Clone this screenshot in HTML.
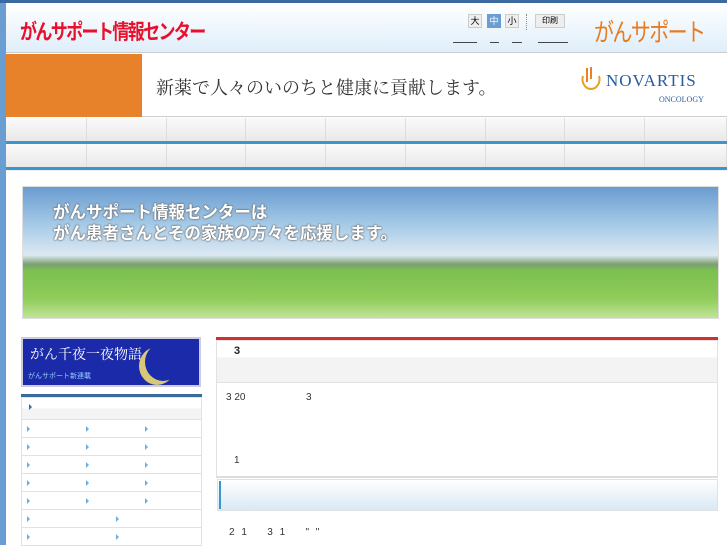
<!DOCTYPE html>
<html><head><meta charset="utf-8"><style>
*{margin:0;padding:0;box-sizing:border-box}
body{width:727px;height:545px;overflow:hidden;background:#fff;font-family:"Liberation Sans","Noto Sans CJK JP",sans-serif;position:relative}
.a{position:absolute}
.navc{position:absolute;height:24px;border-right:1px solid #ddd;background:linear-gradient(#fafafa,#e8e8e8)}
.row{position:absolute;left:21px;width:181px;height:18px;border-bottom:1px solid #e2e2e2;border-left:1px solid #e2e2e2;border-right:1px solid #e2e2e2}
.tri{position:absolute;width:0;height:0;border-left:3px solid #6ab0e0;border-top:3px solid transparent;border-bottom:3px solid transparent;top:6px}
</style></head><body>
<div class="a" style="left:0;top:0;width:6px;height:545px;background:#6a9ed2"></div>
<div class="a" style="left:0;top:0;width:727px;height:3px;background:#3a6aa0"></div>
<div class="a" style="left:6px;top:3px;width:721px;height:50px;background:linear-gradient(#fff,#dfeefa);border-bottom:1px solid #ccc"></div>
<div class="a" style="left:20px;top:16px;font-size:21px;font-weight:bold;color:#e8102a;letter-spacing:-2px;transform:scaleX(0.81);transform-origin:left;white-space:nowrap">がんサポート情報センター</div>
<div class="a" style="left:468px;top:14px;width:14px;height:14px;background:#eee;border:1px solid #ccc;font-size:9px;text-align:center;line-height:12px">大</div>
<div class="a" style="left:487px;top:14px;width:14px;height:14px;background:#6a9ed2;color:#fff;font-size:9px;text-align:center;line-height:14px">中</div>
<div class="a" style="left:505px;top:14px;width:14px;height:14px;background:#eee;border:1px solid #ccc;font-size:9px;text-align:center;line-height:12px">小</div>
<div class="a" style="left:526px;top:14px;height:16px;border-left:1px dotted #888"></div>
<div class="a" style="left:535px;top:14px;width:30px;height:14px;background:#eee;border:1px solid #ccc;font-size:8px;text-align:center;line-height:12px">印刷</div>
<div class="a" style="left:453px;top:42px;width:24px;border-top:1px solid #444"></div>
<div class="a" style="left:490px;top:42px;width:9px;border-top:1px solid #444"></div>
<div class="a" style="left:512px;top:42px;width:10px;border-top:1px solid #444"></div>
<div class="a" style="left:538px;top:42px;width:30px;border-top:1px solid #444"></div>
<div class="a" style="left:594px;top:13px;font-size:25px;color:#e87a20;letter-spacing:-2px;transform:scaleX(0.8);transform-origin:left;white-space:nowrap">がんサポート</div>
<div class="a" style="left:6px;top:54px;width:721px;height:63px;background:#fff;border-bottom:1px solid #ccc"></div>
<div class="a" style="left:6px;top:54px;width:136px;height:63px;background:#e8822a"></div>
<div class="a" style="left:156px;top:74px;font-size:18px;color:#333;font-family:'Liberation Serif','Noto Serif CJK SC',serif">新薬で人々のいのちと健康に貢献します。</div>
<svg class="a" style="left:580px;top:66px" width="22" height="26" viewBox="0 0 22 26"><path d="M7 2v14M11 1v12" stroke="#e8822a" stroke-width="2" fill="none"/><path d="M3 10c-2 6 2 13 8 13s10-7 8-13" stroke="#e8a020" stroke-width="2" fill="none"/></svg>
<div class="a" style="left:606px;top:71px;font-size:17px;color:#2a5aa0;font-family:'Liberation Serif',serif;letter-spacing:1px">NOVARTIS</div>
<div class="a" style="left:659px;top:95px;font-size:8px;color:#2a5aa0;font-family:'Liberation Serif',serif">ONCOLOGY</div>
<div class="a" style="left:6px;top:118px;width:721px;height:53px;background:#f2f2f2"></div>
<div id="nav"></div>
<div class="a" style="left:6px;top:141px;width:721px;height:3px;background:#3a96cc"></div>
<div class="a" style="left:6px;top:167px;width:721px;height:3px;background:#3a96cc"></div>
<div class="a" style="left:22px;top:186px;width:697px;height:133px;border:1px solid #ddd;background:linear-gradient(#6a9cd0 0%,#a8cce8 30%,#dde9f2 52%,#7aa070 59%,#7cc050 64%,#90cc5a 85%,#c0e498 100%)"></div>
<div class="a" style="left:53px;top:202px;font-size:17px;font-weight:bold;color:#fff;line-height:21px;text-shadow:0 0 2px #666,0 0 2px #666;white-space:nowrap;transform:scaleX(0.97);transform-origin:left">がんサポート情報センターは<br>がん患者さんとその家族の方々を応援します。</div>
<div class="a" style="left:21px;top:337px;width:180px;height:50px;background:#1a2aa8;border:2px solid #ccd;overflow:hidden"><div class="a" style="left:122px;top:4px;width:36px;height:38px;border-radius:50%;box-shadow:-6px 4px 0 0 #d8c878"></div></div>
<div class="a" style="left:30px;top:344px;font-size:14px;color:#fff;font-family:'Noto Serif CJK SC',serif">がん千夜一夜物語</div>
<div class="a" style="left:28px;top:371px;font-size:7px;color:#9cf">がんサポート新連載</div>
<div class="a" style="left:21px;top:394px;width:181px;height:3px;background:#3a6aa0"></div>
<div class="a" style="left:21px;top:397px;width:181px;height:23px;border:1px solid #e2e2e2;background:linear-gradient(#fff 50%,#f4f4f6 50%)"></div>
<div class="a" style="left:29px;top:404px;border-left:3px solid #3a6aa0;border-top:3px solid transparent;border-bottom:3px solid transparent"></div>
<div id="rows"></div>
<div class="a" style="left:216px;top:337px;width:502px;height:3px;background:#d03030"></div>
<div class="a" style="left:216px;top:340px;width:502px;height:43px;border:1px solid #e2e2e2;background:linear-gradient(#fff 40%,#f3f3f4 40%)"></div>
<div class="a" style="left:234px;top:345px;font-size:11px;font-weight:bold;color:#222">3</div>
<div class="a" style="left:216px;top:383px;width:502px;height:95px;border:1px solid #e2e2e2;border-top:none;border-bottom:2px solid #ddd"></div>
<div class="a" style="left:226px;top:392px;font-size:10px;color:#333">3 20</div>
<div class="a" style="left:306px;top:392px;font-size:10px;color:#333">3</div>
<div class="a" style="left:234px;top:455px;font-size:10px;color:#333">1</div>
<div class="a" style="left:217px;top:479px;width:501px;height:32px;border:1px solid #e2e2e2;background:linear-gradient(#fff,#d8e8f4)"></div>
<div class="a" style="left:219px;top:481px;width:2px;height:28px;background:#3a96cc"></div>
<div class="a" style="left:229px;top:527px;font-size:10px;color:#333;word-spacing:4px">2 1 &nbsp; 3 1 &nbsp; " "</div>
<script>
var n=document.getElementById('nav'),h='';
var xs=[6,87,167,246,326,406,486,565,645,727];
for(var r=0;r<2;r++)for(var i=0;i<9;i++)h+='<div class="navc" style="left:'+xs[i]+'px;top:'+(118+r*26)+'px;width:'+(xs[i+1]-xs[i])+'px"></div>';
n.innerHTML=h;
var rr='';
for(var k=0;k<7;k++){var y=420+k*18;rr+='<div class="row" style="top:'+y+'px">';
var t=k<5?[5,64,123]:[5,94];t.forEach(function(x){rr+='<span class="tri" style="left:'+x+'px"></span>'});rr+='</div>';}
document.getElementById('rows').innerHTML=rr;
</script>
</body></html>
